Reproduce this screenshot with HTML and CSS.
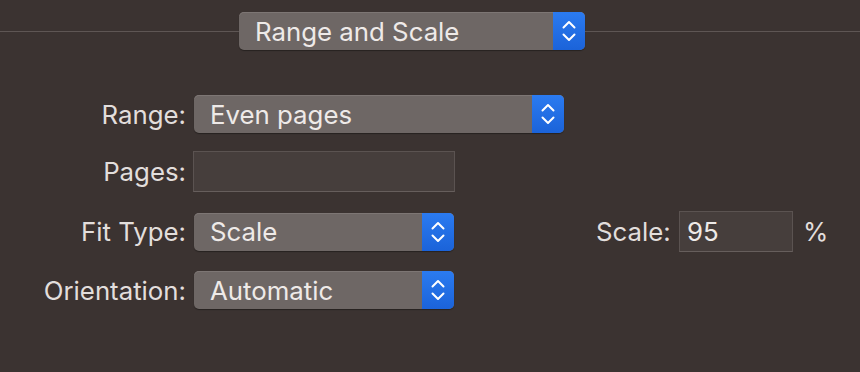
FILE: index.html
```html
<!DOCTYPE html>
<html>
<head>
<meta charset="utf-8">
<link rel="stylesheet" href="styles.css">
</head>
<body>
<div class="panel">
  <div class="header">
    <div class="rule rule-left"></div>
    <div class="popup popup-title">
      <span class="popup-text">Range and Scale</span>
      <span class="popup-arrows">
        <svg width="14" height="22" viewBox="0 0 14 22"><path d="M1.5 7.5 L7 2 L12.5 7.5 M1.5 14.5 L7 20 L12.5 14.5" fill="none" stroke="#fff" stroke-width="2" stroke-linecap="round" stroke-linejoin="round"/></svg>
      </span>
    </div>
    <div class="rule rule-right"></div>
  </div>

  <div class="rows">
    <div class="row row-range">
      <label class="label">Range:</label>
      <div class="popup popup-range">
        <span class="popup-text">Even pages</span>
        <span class="popup-arrows">
          <svg width="14" height="22" viewBox="0 0 14 22"><path d="M1.5 7.5 L7 2 L12.5 7.5 M1.5 14.5 L7 20 L12.5 14.5" fill="none" stroke="#fff" stroke-width="2" stroke-linecap="round" stroke-linejoin="round"/></svg>
        </span>
      </div>
    </div>

    <div class="row row-pages">
      <label class="label">Pages:</label>
      <div class="field field-pages"></div>
    </div>

    <div class="row row-fit">
      <label class="label">Fit Type:</label>
      <div class="popup popup-small">
        <span class="popup-text">Scale</span>
        <span class="popup-arrows">
          <svg width="14" height="22" viewBox="0 0 14 22"><path d="M1.5 7.5 L7 2 L12.5 7.5 M1.5 14.5 L7 20 L12.5 14.5" fill="none" stroke="#fff" stroke-width="2" stroke-linecap="round" stroke-linejoin="round"/></svg>
        </span>
      </div>
      <label class="scale-label">Scale:</label>
      <div class="field field-scale">95</div>
      <span class="percent">%</span>
    </div>

    <div class="row row-orient">
      <label class="label">Orientation:</label>
      <div class="popup popup-small">
        <span class="popup-text">Automatic</span>
        <span class="popup-arrows">
          <svg width="14" height="22" viewBox="0 0 14 22"><path d="M1.5 7.5 L7 2 L12.5 7.5 M1.5 14.5 L7 20 L12.5 14.5" fill="none" stroke="#fff" stroke-width="2" stroke-linecap="round" stroke-linejoin="round"/></svg>
        </span>
      </div>
    </div>
  </div>
</div>
</body>
</html>
```

FILE: styles.css
```css
html, body {
  margin: 0;
  padding: 0;
  background: #3b3331;
  width: 860px;
  height: 372px;
  overflow: hidden;
}

.panel {
  font-family: "Inter", "Noto Sans", sans-serif;
  font-size: 25.8px;
  color: #e2dedc;
  padding-top: 12px;
}

.header {
  display: flex;
  align-items: center;
  height: 38px;
}

.rule {
  height: 1px;
  background: #5e5654;
}

.rule-left {
  width: 239px;
}

.rule-right {
  flex: 1;
}

.popup {
  display: flex;
  align-items: stretch;
  height: 38px;
  box-sizing: border-box;
  border-radius: 5px;
  overflow: hidden;
  background: #6e6765;
  box-shadow: inset 0 1px 0 #7d7674, 0 1px 1px rgba(0,0,0,0.35);
}

.popup-text {
  flex: 1;
  display: flex;
  align-items: center;
  padding-left: 16px;
  color: #eeeae8;
  white-space: nowrap;
}

.popup-arrows {
  width: 32px;
  display: flex;
  align-items: center;
  justify-content: center;
  background: linear-gradient(#2b7bf0, #1b63d9);
}

.popup-title {
  width: 346px;
}

.popup-range {
  width: 370px;
}

.popup-small {
  width: 260px;
}

.rows {
  display: flex;
  flex-direction: column;
  gap: 19px;
  margin-top: 45px;
}

.row {
  display: flex;
  align-items: center;
}

.row-range {
  margin-bottom: -1px;
}

.label {
  width: 186px;
  text-align: right;
  margin-right: 8px;
  white-space: nowrap;
}

.field {
  box-sizing: border-box;
  background: #463e3c;
  border: 1px solid #5b5351;
  border-bottom-color: #665e5c;
  height: 41px;
  display: flex;
  align-items: center;
  color: #eeeae8;
}

.field-pages {
  width: 262px;
  margin-left: -1px;
}

.scale-label {
  margin-left: 142px;
  width: 72px;
  text-align: right;
  white-space: nowrap;
}

.field-scale {
  margin-left: 11px;
  width: 114px;
  padding-left: 7px;
}

.percent {
  margin-left: 10px;
}
```
